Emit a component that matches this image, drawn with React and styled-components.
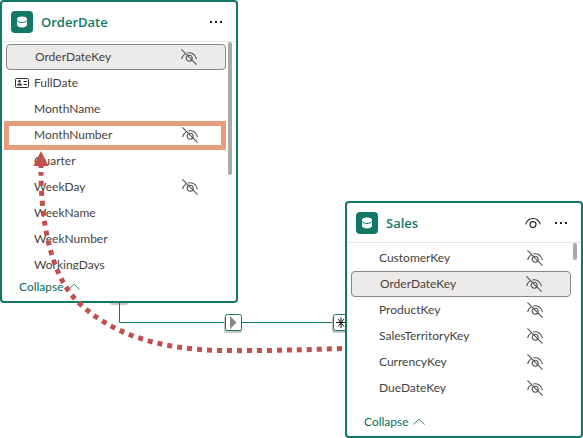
import React from "react";
import styled, { createGlobalStyle } from "styled-components";

const GlobalStyle = createGlobalStyle`
  *, *::before, *::after { box-sizing: border-box; }
  body {
    margin: 0;
    background: #ffffff;
    font-family: Lato, "Open Sans", sans-serif;
    font-size: 12px;
    color: #454341;
  }
`;

const green = "#117865";

const Canvas = styled.main`
  position: relative;
  min-height: 100vh;
  overflow: hidden;
`;

const Links = styled.svg`
  position: absolute;
  left: 0;
  top: 0;
  overflow: visible;
  pointer-events: none;
`;

const Card = styled.section`
  position: absolute;
  left: ${(p) => p.$x}px;
  top: ${(p) => p.$y}px;
  width: 238px;
  background: #ffffff;
  border: 2px solid ${green};
  border-radius: 4px;
`;

const Header = styled.header`
  display: flex;
  align-items: center;
  gap: 12px;
  padding: 9px 12px 8px 9px;
  border-bottom: 1px solid #e6e6e6;
`;

const Heading = styled.div`
  display: flex;
  align-items: center;
  gap: 8px;
  flex: 1;
`;

const TableBadge = styled.span`
  display: grid;
  place-items: center;
  width: 22px;
  height: 22px;
  border-radius: 4px;
  background: ${green};
`;

const Title = styled.h2`
  margin: 0;
  font-family: "Open Sans", "Noto Sans", sans-serif;
  font-size: 13px;
  line-height: 20px;
  font-weight: 600;
  color: ${green};
`;

const IconButton = styled.button`
  display: grid;
  place-items: center;
  width: 16px;
  height: 16px;
  padding: 0;
  border: 0;
  background: none;
  color: #252423;
  cursor: pointer;
`;

const ListArea = styled.div`
  display: flex;
  align-items: flex-start;
  height: ${(p) => p.$height}px;
  overflow: hidden;
`;

const FieldList = styled.ul`
  flex: 1;
  margin: 0;
  padding: 2px 2px 0 4px;
  list-style: none;
`;

const Field = styled.li`
  display: flex;
  align-items: center;
  height: 26px;
  padding-right: 28px;
  border: ${(p) => (p.$selected ? "1px solid #8a8886" : "0")};
  border-radius: 4px;
  background: ${(p) => (p.$selected ? "#edebe9" : "transparent")};
`;

const FieldIcon = styled.span`
  display: grid;
  place-items: center;
  width: 28px;
  padding-left: 4px;
`;

const FieldName = styled.span`
  flex: 1;
  line-height: 18px;
`;

const ScrollThumb = styled.span`
  width: 4px;
  height: ${(p) => p.$height}px;
  margin-right: 4px;
  border-radius: 2px;
  background: #a9a9a9;
`;

const Footer = styled.footer`
  display: flex;
  align-items: center;
  height: 31px;
  padding: 2px 17px 0;
`;

const CollapseButton = styled.button`
  display: flex;
  align-items: center;
  gap: 4px;
  padding: 0;
  border: 0;
  background: none;
  font: inherit;
  line-height: 18px;
  color: #0c6b5c;
  cursor: pointer;
`;

const Highlight = styled.div`
  position: absolute;
  left: 4px;
  top: 121px;
  width: 222px;
  height: 29px;
  border: 5px solid #e59e7b;
`;

const DatabaseIcon = () => (
  <svg width="12" height="14" viewBox="0 0 12 14" aria-hidden="true">
    <path d="M1 4v5.800C1 11.400 3.200 12.600 6 12.600s5-1.200 5-2.800V4z" fill="#fff" />
    <ellipse cx="6" cy="4" rx="5" ry="2.600" fill="#fff" />
    <path d="M1 5.200C2 7 4 7.500 6 7.500S10 7 11 5.200" fill="none" stroke={green} strokeWidth="1" />
  </svg>
);

const HiddenIcon = () => (
  <svg width="16" height="16" viewBox="0 0 16 16" fill="none" stroke="#565452" strokeWidth="1.1" role="img" aria-label="Hidden field">
    <path d="M.4.4l15.2 15.2M.6 10C1.2 7.6 2.4 6 4.2 4.900M6.2 4c3.8-1 8.1.9 9.3 6" />
    <circle cx="8.2" cy="9.2" r="3" />
  </svg>
);

const EyeIcon = () => (
  <svg width="16" height="16" viewBox="0 0 16 16" fill="none" stroke="currentColor" strokeWidth="1.1" aria-hidden="true">
    <path d="M.6 9.4C1.8 5.6 4.7 3.500 8 3.500s6.2 2.1 7.4 5.900" />
    <circle cx="8" cy="9.6" r="3" />
  </svg>
);

const MoreIcon = () => (
  <svg width="16" height="16" viewBox="0 0 16 16" fill="currentColor" aria-hidden="true">
    <rect x="2" y="7" width="2" height="2" />
    <rect x="7" y="7" width="2" height="2" />
    <rect x="12" y="7" width="2" height="2" />
  </svg>
);

const KeyCardIcon = () => (
  <svg width="14" height="10" viewBox="0 0 14 10" fill="none" stroke="#323130" aria-hidden="true">
    <rect x=".5" y=".5" width="13" height="9" rx="1" />
    <path d="M8.500 3.500H12M8.500 6.500H12" />
    <circle cx="4.500" cy="3.300" r="1.300" fill="#323130" stroke="none" />
    <path d="M2 7.600c0-3.200 5-3.200 5 0z" fill="#323130" stroke="none" />
  </svg>
);

const ChevronIcon = () => (
  <svg width="12" height="8" viewBox="0 0 12 8" fill="none" stroke="#3d8579" aria-hidden="true">
    <path d="M.5 6.500L6 1.200l5.500 5.300" />
  </svg>
);

const tables = [
  {
    name: "OrderDate",
    x: 0,
    y: 0,
    listHeight: 228,
    thumb: 133,
    fields: [
      { name: "OrderDateKey", hidden: true, selected: true },
      { name: "FullDate", keyField: true },
      { name: "MonthName" },
      { name: "MonthNumber", hidden: true },
      { name: "Quarter" },
      { name: "WeekDay", hidden: true },
      { name: "WeekName" },
      { name: "WeekNumber" },
      { name: "WorkingDays" },
    ],
  },
  {
    name: "Sales",
    x: 345,
    y: 201,
    listHeight: 162,
    thumb: 17,
    showEye: true,
    fields: [
      { name: "CustomerKey", hidden: true },
      { name: "OrderDateKey", hidden: true, selected: true },
      { name: "ProductKey", hidden: true },
      { name: "SalesTerritoryKey", hidden: true },
      { name: "CurrencyKey", hidden: true },
      { name: "DueDateKey", hidden: true },
    ],
  },
];

function TableCard({ table }) {
  return (
    <Card $x={table.x} $y={table.y} aria-label={table.name}>
      <Header>
        <Heading>
          <TableBadge>
            <DatabaseIcon />
          </TableBadge>
          <Title>{table.name}</Title>
        </Heading>
        {table.showEye && (
          <IconButton type="button" aria-label="Toggle visibility">
            <EyeIcon />
          </IconButton>
        )}
        <IconButton type="button" aria-label="More options">
          <MoreIcon />
        </IconButton>
      </Header>
      <ListArea $height={table.listHeight}>
        <FieldList>
          {table.fields.map((field) => (
            <Field key={field.name} $selected={field.selected}>
              <FieldIcon>{field.keyField && <KeyCardIcon />}</FieldIcon>
              <FieldName>{field.name}</FieldName>
              {field.hidden && <HiddenIcon />}
            </Field>
          ))}
        </FieldList>
        <ScrollThumb $height={table.thumb} />
      </ListArea>
      <Footer>
        <CollapseButton type="button">
          Collapse
          <ChevronIcon />
        </CollapseButton>
      </Footer>
    </Card>
  );
}

const Relationship = () => (
  <Links width="360" height="340" aria-hidden="true">
    <rect x="110" y="290" width="18" height="15" rx="2" fill="#c8c8c8" />
    <path d="M119.500 303V322.500H345" fill="none" stroke={green} />
    <rect x="224" y="316" width="18" height="17" rx="2" fill="#c8c8c8" />
    <rect x="225.500" y="314.500" width="16" height="16" rx="2" fill="#fff" stroke={green} />
    <path d="M230 316v13l6.500-6.500z" fill="#8a8886" />
    <rect x="332" y="316" width="18" height="17" rx="2" fill="#c8c8c8" />
    <rect x="333.500" y="314.500" width="16" height="16" rx="2" fill="#fff" stroke={green} />
    <path d="M341 317.500v10.500M336 322.500h10M338 319l6 7.500M338 326.500l6-7.500" stroke="#111" />
  </Links>
);

const FilterArrow = () => (
  <Links width="360" height="360" aria-hidden="true">
    <path
      d="M342 348.500C300 350 260 351 220 350.500C160 349 110 335 75 299C47 268 41 210 41 172"
      fill="none"
      stroke="#c0504d"
      strokeWidth="5"
      strokeDasharray="5 5"
    />
    <path d="M41 151l7.500 15h-5v2h-5v-2h-5z" fill="#c0504d" />
  </Links>
);

export default function App() {
  return (
    <>
      <GlobalStyle />
      <Canvas>
        <Relationship />
        {tables.map((table) => (
          <TableCard key={table.name} table={table} />
        ))}
        <Highlight />
        <FilterArrow />
      </Canvas>
    </>
  );
}
